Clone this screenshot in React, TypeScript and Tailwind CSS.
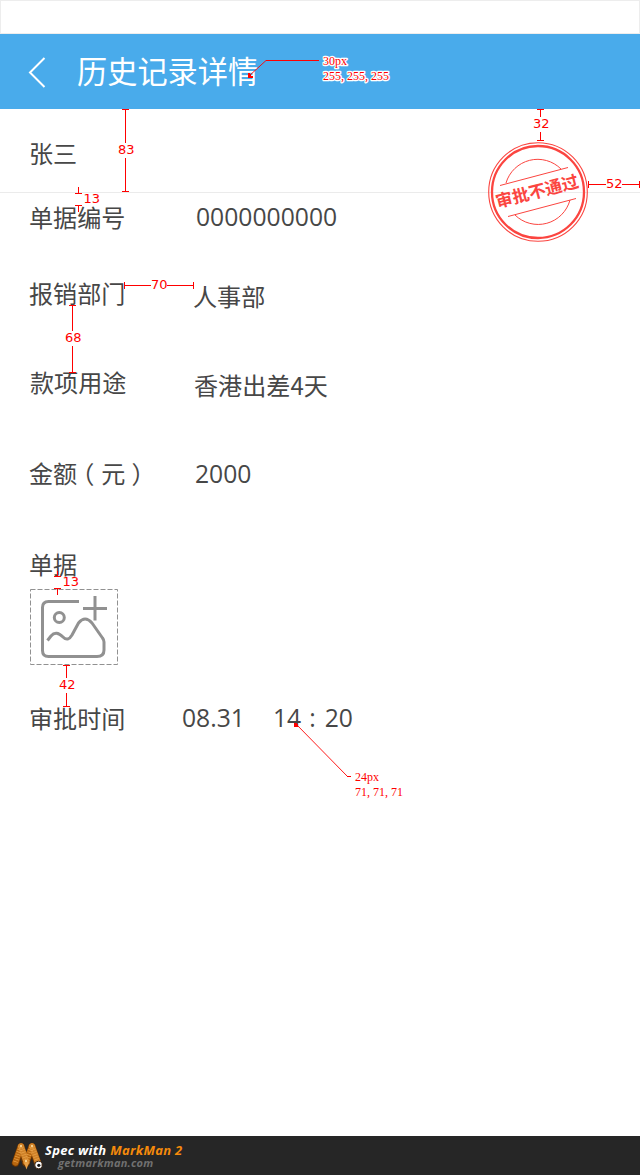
import type { ReactNode } from "react";

const CJK = "font-['Noto_Sans_CJK_SC',sans-serif]";

function Row({ label, children, className }: { label: ReactNode; children?: ReactNode; className: string }) {
  return (
    <div className={`flex h-9 items-start whitespace-pre leading-9 ${className}`}>
      <div className="w-24 shrink-0">{label}</div>
      {children}
    </div>
  );
}

function Stamp() {
  return (
    <svg className="absolute left-[488px] top-[142px] h-[100px] w-[100px]" viewBox="0 0 100 100" fill="none" stroke="#fb4540">
      <circle cx="50" cy="50" r="49.3" strokeWidth="1.1" />
      <circle cx="50" cy="50" r="46" strokeWidth="2.3" />
      <path d="M18 41A33 33 0 0 1 73 27M27 73A33 33 0 0 0 82 58" strokeWidth="1" />
      <path d="M12 43.5L80 25.5M20 74.5L88 56.5" strokeWidth="1" />
      <text
        x="49"
        y="55.3"
        transform="rotate(-14.5 50 49)"
        textAnchor="middle"
        fill="#fb4540"
        stroke="none"
        fontSize="17"
        fontWeight="700"
        fontFamily="'Noto Sans CJK SC', sans-serif"
      >
        审批不通过
      </text>
    </svg>
  );
}

function Upload() {
  return (
    <svg className="ml-[30px] mt-[5px] h-[76px] w-[88px]" viewBox="0 0 88 76" fill="none" stroke="#919191">
      <rect x="0.5" y="0.5" width="87" height="75" strokeDasharray="5 2" />
      <path
        d="M49 12.5H18.500Q12.500 12.500 12.500 18.500V61.500Q12.500 67.500 18.500 67.500H67Q74 67.500 74 61V53Q74 51 72.500 49L62 34Q55 26 48.500 34L42 46Q38 53 33 48Q26 41 21 47L17.500 51.500"
        strokeWidth="3"
        strokeLinejoin="round"
      />
      <circle cx="29.300" cy="28.500" r="5" strokeWidth="3" />
      <path d="M53 19.500H77M65 7V31.500" strokeWidth="3" />
    </svg>
  );
}

function Markers() {
  return (
    <svg className="pointer-events-none absolute left-0 top-0 h-[1175px] w-[640px]" viewBox="0 0 640 1175" fill="none">
      <g stroke="#ff0000" shapeRendering="crispEdges">
        <path d="M122 109.500H129M125.500 109V143M125.500 158V192M122 191.500H129" />
        <path d="M78.500 187V194M75 193.500H82M75 205.500H82M78.500 205V212" />
        <path d="M124.500 282V289M124 285.500H151M167 285.500H194M193.500 282V289" />
        <path d="M69 305.500H76M72.500 305V331M72.500 346V373M69 372.500H76" />
        <path d="M57.500 571V577M54 576.500H61M54 588.500H61M57.500 588V595" />
        <path d="M63 665.500H70M66.500 665V678M66.500 693V707M63 706.500H70" />
        <path d="M537 109.500H544M540.500 109V117M540.500 132V141M537 140.500H544" />
        <path d="M588.500 181V188M588 184.500H606M622 184.500H640M639.500 181V188" />
        <path d="M266 60.500H319M347 776.500H351" />
      </g>
      <path d="M266 60.500L249 76M296 724L347.500 776.500" stroke="#ff0000" strokeWidth="0.9" />
      <path d="M248 73V78H253V76H251V74H250V73ZM294 723H297V724H298V727H294Z" fill="#ff0000" shapeRendering="crispEdges" />
      <g fill="#ff0000" fontSize="13" fontFamily="'DejaVu Sans', sans-serif">
        <text x="118" y="154">83</text>
        <text x="83.500" y="203">13</text>
        <text x="151" y="289">70</text>
        <text x="65" y="342">68</text>
        <text x="62.500" y="586">13</text>
        <text x="59" y="689">42</text>
        <text x="533" y="128">32</text>
        <text x="606" y="188">52</text>
      </g>
      <g
        fill="#ff0000"
        stroke="#ffffff"
        strokeWidth="2.5"
        paintOrder="stroke"
        strokeLinejoin="round"
        fontSize="12"
        fontFamily="'Liberation Serif', serif"
      >
        <text x="323" y="65">30px</text>
        <text x="323" y="80">255, 255, 255</text>
        <text x="355" y="781">24px</text>
        <text x="355" y="796">71, 71, 71</text>
      </g>
    </svg>
  );
}

function Worm() {
  return (
    <svg className="ml-[11px] mt-[5px] h-[30px] w-[33px] shrink-0" viewBox="0 0 33 30" fill="none" strokeLinecap="round">
      <path d="M4.500 22L10 6M10 6L15 22M15 22L21 6M21 6L27 23" stroke="#6d3500" strokeWidth="7.500" />
      <path d="M4.500 21.500L10 5.500M15 21L21 5.500" stroke="#b9670f" strokeWidth="6.200" />
      <path d="M10 5.500L15.500 21M21 5.500L27 22" stroke="#cf8229" strokeWidth="6.200" />
      <path
        d="M4.500 21L10 5.500L15.500 21L21 5.500L27 22"
        stroke="#e7a047"
        strokeWidth="5"
        strokeDasharray="0.7 1.8"
        strokeLinecap="butt"
      />
      <circle cx="10" cy="5" r="1" fill="#ffe9b0" />
      <circle cx="21" cy="5" r="1" fill="#ffe9b0" />
      <circle cx="15" cy="20" r="1" fill="#ffe9b0" />
      <circle cx="27.500" cy="24" r="3.800" fill="#fff" stroke="#3b2410" />
      <circle cx="27.800" cy="24.300" r="1.600" fill="#171717" />
    </svg>
  );
}

export default function App() {
  const num = "font-['Open_Sans',sans-serif] text-[24.7px]";
  return (
    <div className={`relative flex h-[1175px] w-[640px] flex-col overflow-hidden bg-white text-[24.1px] text-[#474747] ${CJK}`}>
      <div className="h-[34px] shrink-0 border border-[#ededed]" />
      <header className="flex h-[75px] shrink-0 items-center bg-[#49abeb] text-white">
        <svg className="ml-7 h-8 w-[18px]" viewBox="0 0 18 32" fill="none" stroke="currentColor" strokeWidth="2">
          <path d="M16.500 2L2 16.500L16.500 31" />
        </svg>
        <h1 className="mb-[3px] ml-[31px] text-[30.2px] font-normal leading-[72px]">历史记录详情</h1>
      </header>
      <section className="h-[84px] shrink-0 border-b border-[#ebebeb] pl-[29px] pt-[26px] leading-9">张三</section>
      <main className="flex flex-1 flex-col">
        <Row label="单据编号" className="mt-[6px] pl-[29px]">
          <span className={`ml-[71px] ${num}`}>0000000000</span>
        </Row>
        <Row label="报销部门" className="mt-10 pl-[29px]">
          <span className="ml-[68px] mt-[3px]">人事部</span>
        </Row>
        <Row label="款项用途" className="mt-[53px] pl-[30px]">
          <span className="ml-[68px] mt-[3px]">香港出差4天</span>
        </Row>
        <Row
          label={
            <>
              金额<span className="-ml-[7px]">（</span><span className="ml-[7px]">元</span><span className="ml-[6px]">）</span>
            </>
          }
          className="mt-[55px] pl-[29px]"
        >
          <span className={`ml-[70px] mt-px ${num}`}>2000</span>
        </Row>
        <Row label="单据" className="mt-[55px] pl-[29px]" />
        <div className="mt-[2px] flex">
          <Upload />
        </div>
        <Row label="审批时间" className="mt-[35px] pl-[29px]">
          <span className={`ml-[57px] ${num}`}>08.31</span>
          <span className={`ml-[28px] ${num}`}>14</span>
          <span className={`ml-[8px] ${num}`}>:</span>
          <span className={`ml-[9px] ${num}`}>20</span>
        </Row>
      </main>
      <footer className="flex h-[39px] shrink-0 bg-[#262626] font-['Open_Sans',sans-serif] font-bold italic">
        <Worm />
        <div className="pt-[6px]">
          <div className="ml-px text-[13px] leading-4 tracking-[0.3px] text-white">
            Spec with <span className="text-[#f58a0b]">MarkMan 2</span>
          </div>
          <div className="ml-[14px] mt-[-2px] text-[11px] leading-[13px] tracking-[0.25px] text-[#707070]">getmarkman.com</div>
        </div>
      </footer>
      <Stamp />
      <Markers />
    </div>
  );
}
